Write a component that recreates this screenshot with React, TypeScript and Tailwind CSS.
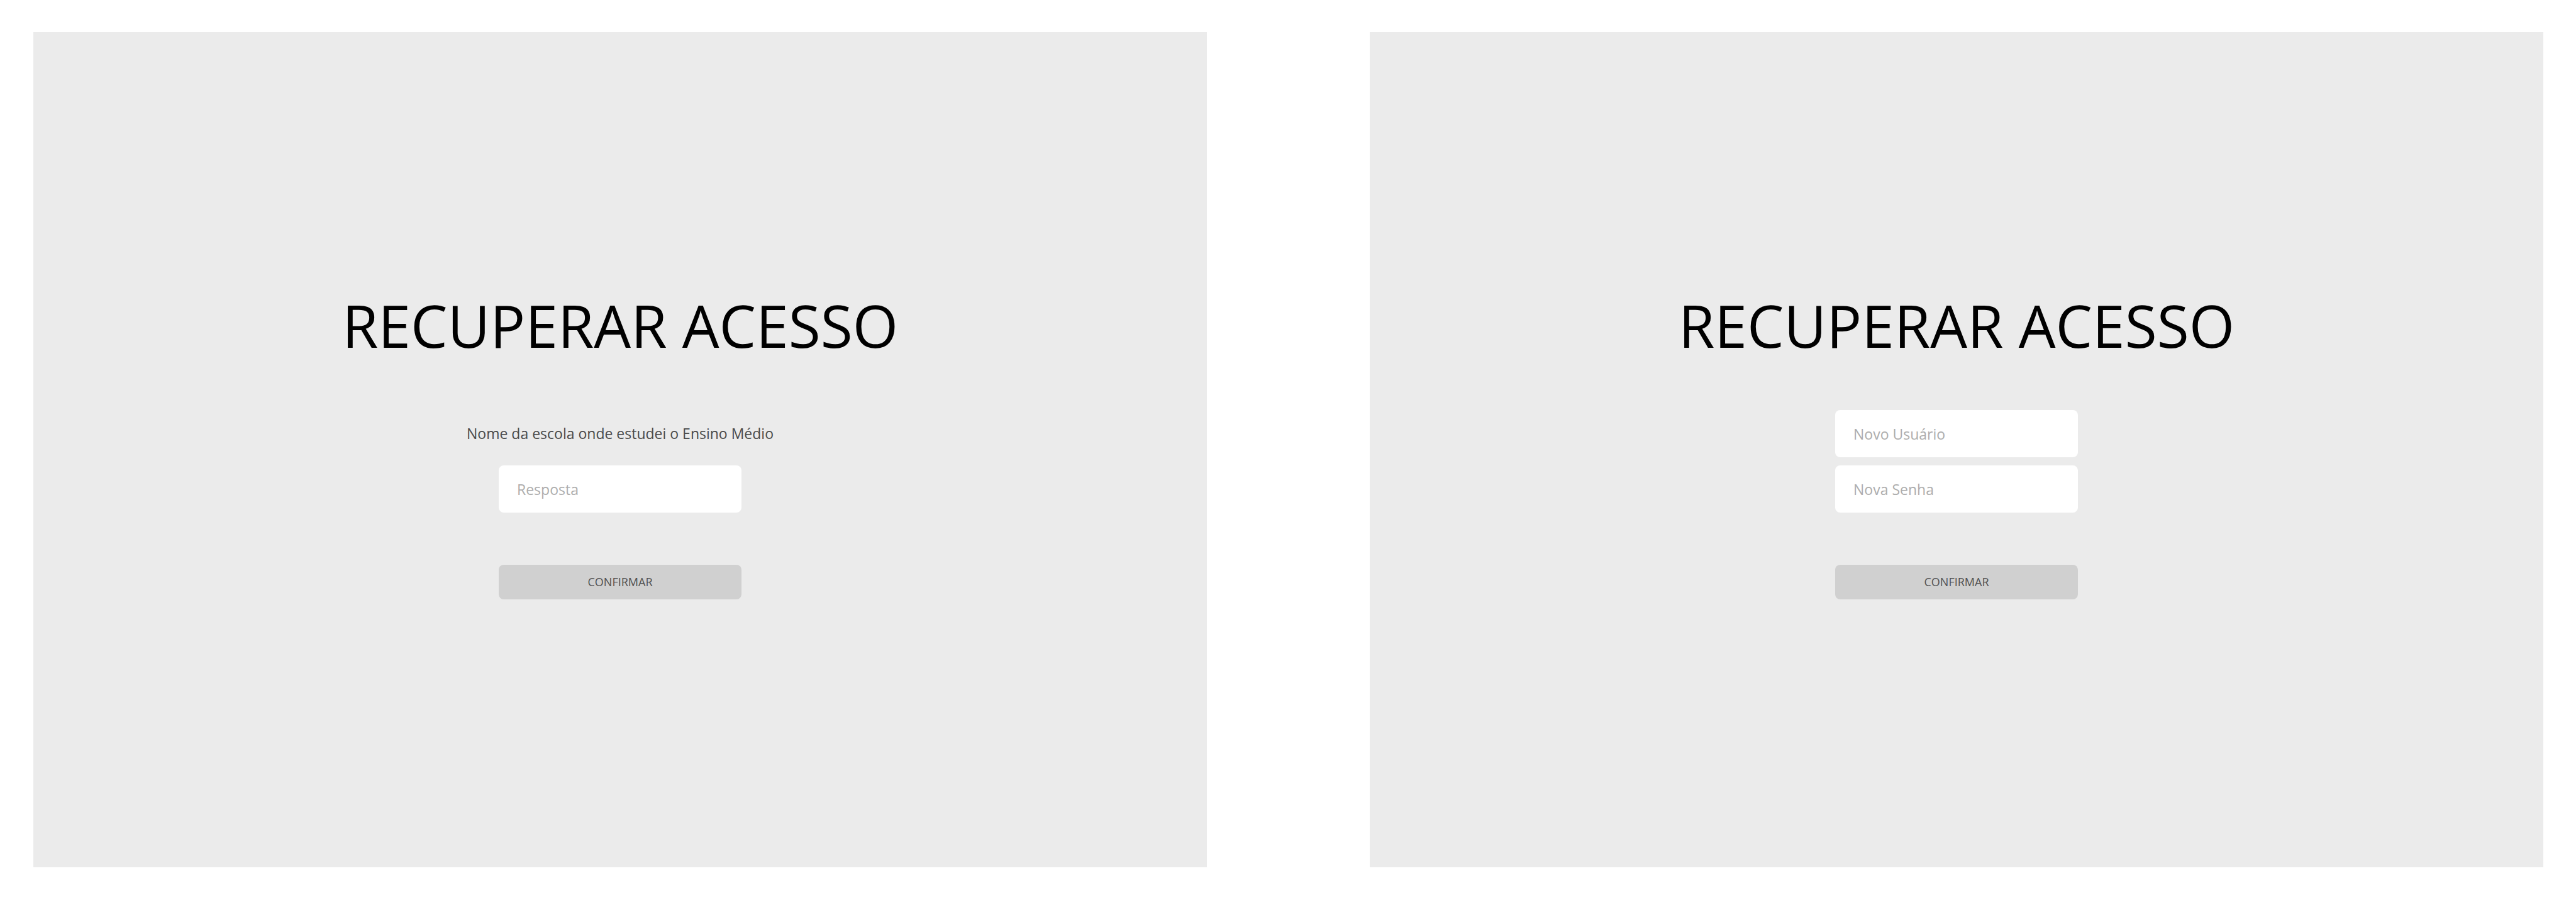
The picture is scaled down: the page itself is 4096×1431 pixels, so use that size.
import React from "react";

type Field = { id: string; placeholder: string; type: string };

type RecoveryPanelProps = {
  question?: string;
  fields: Field[];
};

function RecoveryPanel({ question, fields }: RecoveryPanelProps) {
  return (
    <section className="flex flex-col items-center justify-center bg-[#ebebeb]">
      <h1 className="mb-[95px] text-center text-[93px] leading-[80px] text-black">RECUPERAR ACESSO</h1>
      <form className="flex flex-col items-center" onSubmit={(event) => event.preventDefault()}>
        <div className="flex flex-col items-center gap-[13px]">
          {question && (
            <label
              htmlFor={fields[0].id}
              className="flex h-[75px] items-center text-[23px] whitespace-nowrap text-[#4a4a4a]"
            >
              {question}
            </label>
          )}
          {fields.map((field) => (
            <input
              key={field.id}
              id={field.id}
              type={field.type}
              placeholder={field.placeholder}
              aria-label={question ? undefined : field.placeholder}
              className="h-[75px] w-[386px] rounded-lg bg-white px-[29px] text-[23px] text-black placeholder:text-[#adadad]"
            />
          ))}
        </div>
        <button
          type="submit"
          className="mt-[83px] h-[55px] w-[386px] rounded-lg bg-[#d0d0d0] text-[18px] text-[#505050]"
        >
          CONFIRMAR
        </button>
      </form>
    </section>
  );
}

export default function App() {
  return (
    <main className="grid min-h-screen grid-cols-2 gap-[259px] bg-white pt-[51px] pr-[52px] pb-[52px] pl-[53px] font-['Open_Sans',sans-serif]">
      <RecoveryPanel
        question="Nome da escola onde estudei o Ensino Médio"
        fields={[{ id: "resposta", placeholder: "Resposta", type: "text" }]}
      />
      <RecoveryPanel
        fields={[
          { id: "novo-usuario", placeholder: "Novo Usuário", type: "text" },
          { id: "nova-senha", placeholder: "Nova Senha", type: "password" },
        ]}
      />
    </main>
  );
}
